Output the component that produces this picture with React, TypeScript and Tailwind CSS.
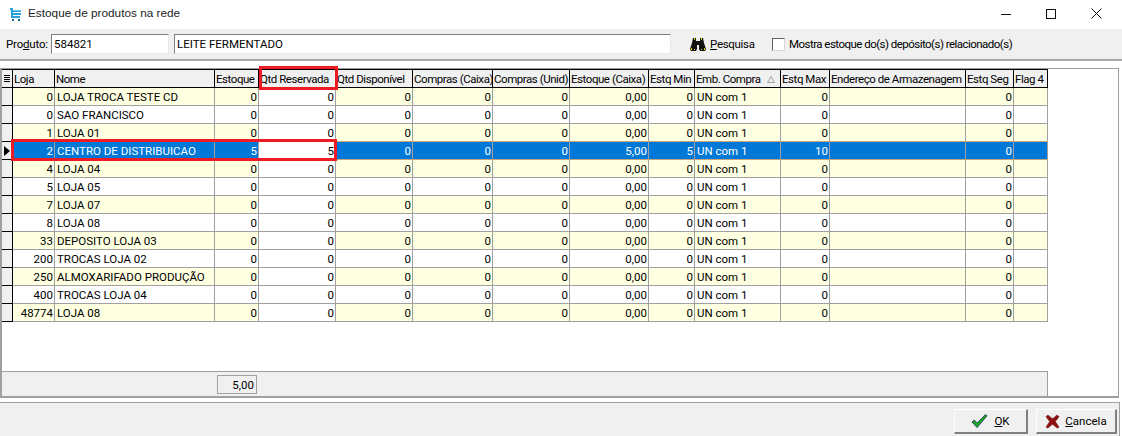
import type { ReactNode } from 'react'

const ROW_GRID = 'grid grid-cols-[11px_42px_160px_44px_77px_77px_80px_77px_79px_46px_86px_49px_136px_48px_34px] w-[1046px]'

const HEADERS = [
  'Loja', 'Nome', 'Estoque', 'Qtd Reservada', 'Qtd Disponível', 'Compras (Caixa)', 'Compras (Unid)',
  'Estoque (Caixa)', 'Estq Min', 'Emb. Compra', 'Estq Max', 'Endereço de Armazenagem', 'Estq Seg', 'Flag 4',
]

const LOJAS: [string, string][] = [
  ['0', 'LOJA TROCA TESTE CD'],
  ['0', 'SAO FRANCISCO'],
  ['1', 'LOJA 01'],
  ['2', 'CENTRO DE DISTRIBUICAO'],
  ['4', 'LOJA 04'],
  ['5', 'LOJA 05'],
  ['7', 'LOJA 07'],
  ['8', 'LOJA 08'],
  ['33', 'DEPOSITO LOJA 03'],
  ['200', 'TROCAS LOJA 02'],
  ['250', 'ALMOXARIFADO PRODUÇÃO'],
  ['400', 'TROCAS LOJA 04'],
  ['48774', 'LOJA 08'],
]

function CartIcon() {
  return (
    <svg width="11" height="14" viewBox="0 0 11 14" className="shrink-0">
      <path d="M0 1h3v2h8v2H3v1h8v2H3v1h7v2H1V3H0z" fill="#2a9fd8" />
      <rect x="3" y="3" width="8" height="1" fill="#62c6f0" />
      <rect x="2" y="12" width="2" height="2" fill="#14709f" />
      <rect x="8" y="12" width="2" height="2" fill="#14709f" />
    </svg>
  )
}

function BinocularsIcon() {
  return (
    <svg width="16" height="14" viewBox="0 0 16 14" className="shrink-0">
      <path d="M3 1h3v3h4V1h3l1 5 2 6-1 2h-5l-1-2V8H7v4l-1 2H1l-1-2 2-6z" fill="#111" />
      <rect x="1" y="11" width="1" height="2" fill="#e8d800" />
      <rect x="4" y="12" width="1" height="1" fill="#e8d800" />
      <rect x="11" y="12" width="1" height="1" fill="#e8d800" />
      <rect x="14" y="11" width="1" height="2" fill="#e8d800" />
      <rect x="4" y="1" width="1" height="2" fill="#e8d800" />
      <rect x="11" y="1" width="1" height="2" fill="#e8d800" />
    </svg>
  )
}

function CheckIcon() {
  return (
    <svg width="17" height="16" viewBox="0 0 18 16" className="shrink-0">
      <path d="M1 9l2.500-2 3 3L15.500 1 17 2.500 6.500 15z" fill="#1fa81f" stroke="#0a2a6a" strokeWidth="0.8" />
    </svg>
  )
}

function CrossIcon() {
  return (
    <svg width="15" height="15" viewBox="0 0 16 16" className="shrink-0">
      <path d="M1 3l2-2 5 4 5-4 2 2-4 5 4 6-2 1-5-4-5 4-2-1 4-6z" fill="#8e1010" stroke="#5e0a0a" strokeWidth="0.5" />
    </svg>
  )
}

function WindowControls() {
  return (
    <div className="ml-auto flex items-center gap-[35px] pr-[20px]">
      <svg width="10" height="10" viewBox="0 0 10 10"><path d="M0 5.500h10" stroke="#111" /></svg>
      <svg width="10" height="10" viewBox="0 0 10 10"><rect x="0.500" y="0.500" width="9" height="9" fill="none" stroke="#111" /></svg>
      <svg width="11" height="11" viewBox="0 0 11 11"><path d="M0.500 0.500l10 10M10.500 0.500l-10 10" stroke="#111" /></svg>
    </div>
  )
}

function HeaderCell({ label }: { label: string }) {
  return (
    <div className="h-[18px] border-r border-b border-black bg-[#f0f0f0] pl-[1px] pt-[2px] flex items-center justify-between overflow-hidden whitespace-nowrap tracking-[-0.45px]">
      <span>{label}</span>
      {label === 'Emb. Compra' && (
        <svg width="8" height="7" viewBox="0 0 8 7" className="mr-[5px] shrink-0">
          <path d="M4 0.500L7.500 6.500H0.500z" fill="none" stroke="#a0a0a0" />
        </svg>
      )}
    </div>
  )
}

function Cell({ children, align, selected, editing, bg }: {
  children?: ReactNode
  align?: 'left' | 'right'
  selected: boolean
  editing?: boolean
  bg: string
}) {
  const tone = editing
    ? 'bg-white text-black'
    : selected
      ? 'bg-[#0078d7] text-white'
      : bg
  return (
    <div
      className={`h-[18px] border-r border-b border-[#a0a0a0] pl-[2px] pr-[1px] leading-[19px] overflow-hidden whitespace-nowrap ${
        align === 'right' ? 'text-right' : 'text-left'
      } ${tone}`}
    >
      {children}
    </div>
  )
}

function DataRow({ loja, nome, index }: { loja: string; nome: string; index: number }) {
  const selected = loja === '2'
  const bg = index % 2 === 0 ? 'bg-[#ffffe1]' : 'bg-white'
  const estoque = selected ? '5' : '0'
  return (
    <div className={`${ROW_GRID} relative`}>
      <div className="h-[18px] border-r border-b border-black bg-[#f0f0f0] flex items-center justify-center">
        {selected && <div className="w-0 h-0 border-y-[5px] border-y-transparent border-l-[6px] border-l-black" />}
      </div>
      <Cell align="right" selected={selected} bg={bg}>{loja}</Cell>
      <Cell selected={selected} bg={bg}>{nome}</Cell>
      <Cell align="right" selected={selected} bg={bg}>{estoque}</Cell>
      <Cell align="right" selected={selected} editing bg={bg}>{estoque}</Cell>
      <Cell align="right" selected={selected} bg={bg}>0</Cell>
      <Cell align="right" selected={selected} bg={bg}>0</Cell>
      <Cell align="right" selected={selected} bg={bg}>0</Cell>
      <Cell align="right" selected={selected} bg={bg}>{selected ? '5,00' : '0,00'}</Cell>
      <Cell align="right" selected={selected} bg={bg}>{estoque}</Cell>
      <Cell selected={selected} bg={bg}>UN com 1</Cell>
      <Cell align="right" selected={selected} bg={bg}>{selected ? '10' : '0'}</Cell>
      <Cell selected={selected} bg={bg} />
      <Cell align="right" selected={selected} bg={bg}>0</Cell>
      <Cell selected={selected} bg={bg} />
      {/* focus rectangle around the current row */}
      {selected && (
        <div className="absolute left-[11px] right-0 top-[-1px] bottom-0 border-y border-dotted border-[#e8a860] pointer-events-none" />
      )}
    </div>
  )
}

export default function App() {
  return (
    <div className="w-[1122px] h-[436px] bg-white flex flex-col overflow-hidden text-[11.5px] text-black font-['Roboto','Liberation_Sans',sans-serif]">
      {/* Title bar */}
      <div className="h-[29px] flex items-center pl-[10px] shrink-0 pb-[2px]">
        <CartIcon />
        <span className="ml-[7px] text-[11.8px] text-[#222] font-['Liberation_Sans',sans-serif]">Estoque de produtos na rede</span>
        <WindowControls />
      </div>

      {/* Product filter */}
      <div className="h-[32px] shrink-0 bg-[#f0f0f0] border-b-2 border-[#a8a8a8] flex items-center pl-[6px] pb-[1px]">
        <span className="w-[45px] pt-[2px] tracking-[-0.2px]">Pro<u>d</u>uto:</span>
        <div className="w-[118px] h-[20px] bg-white border border-t-[#808080] border-l-[#808080] border-r-[#e8e8e8] border-b-[#e8e8e8] pl-[2px] leading-[19px]">584821</div>
        <div className="ml-[5px] w-[497px] h-[20px] bg-white border border-t-[#808080] border-l-[#808080] border-r-[#e8e8e8] border-b-[#e8e8e8] pl-[2px] leading-[19px]">LEITE FERMENTADO</div>
        <div className="ml-[19px] w-[64px] flex items-center gap-[4px]">
          <BinocularsIcon />
          <span className="pt-[2px] tracking-[-0.3px]"><u>P</u>esquisa</span>
        </div>
        <div className="ml-[18px] mt-[1px] w-[13px] h-[13px] bg-white border border-t-[#606060] border-l-[#606060] border-r-[#d8d8d8] border-b-[#d8d8d8]" />
        <span className="ml-[4px] pt-[2px] tracking-[-0.53px]">Mostra estoque do(s) depósito(s) relacionado(s)</span>
      </div>

      {/* Grid panel */}
      <div className="relative mt-[7px] mr-[3px] flex-1 flex flex-col border-l-2 border-t border-r border-[#a0a0a0] min-h-0">
        <div className="flex-1 min-h-0">
          <div className={`${ROW_GRID} border-t border-black`}>
            <div className="h-[18px] border-r border-b border-black bg-[#f0f0f0] flex flex-col justify-center items-center gap-[1px]">
              <div className="w-[6px] h-[1px] bg-black" />
              <div className="w-[6px] h-[1px] bg-black" />
              <div className="w-[6px] h-[1px] bg-black" />
              <div className="w-[6px] h-[1px] bg-black" />
            </div>
            {HEADERS.map((h) => <HeaderCell key={h} label={h} />)}
          </div>
          {LOJAS.map(([loja, nome], i) => (
            <DataRow key={`${loja}-${nome}`} loja={loja} nome={nome} index={i} />
          ))}
        </div>

        {/* Totals */}
        <div className="h-[25px] w-[1046px] shrink-0 bg-[#f0f0f0] border-t border-r border-[#a0a0a0] flex items-center pl-[215px]">
          <div className="w-[40px] h-[19px] border border-[#a0a0a0] text-right pr-[2px] leading-[18px]">5,00</div>
        </div>
        <div className="h-[2px] shrink-0 bg-[#a0a0a0]" />

        {/* Highlights */}
        <div className="absolute left-[257px] top-[-3px] w-[79px] h-[24px] border-[3px] border-[#ed1c24] pointer-events-none" />
        <div className="absolute left-[9px] top-[70px] w-[326px] h-[22px] border-[3px] border-[#ed1c24] pointer-events-none" />
      </div>

      {/* Footer */}
      <div className="h-[34px] shrink-0 mt-[4px] mr-[2px] bg-[#f0f0f0] border-t border-r border-[#a0a0a0] flex items-start justify-end pt-[6px] pr-[2px] gap-[8px]">
        <div className="w-[74px] h-[25px] flex items-center justify-center gap-[6px] bg-[#f0f0f0] border-t border-l border-r-2 border-b-2 border-t-white border-l-white border-r-[#808080] border-b-[#808080]">
          <CheckIcon />
          <span className="pt-[1px]"><u>O</u>K</span>
        </div>
        <div className="w-[81px] h-[25px] flex items-center justify-center gap-[5px] bg-[#f0f0f0] border-t border-l border-r-2 border-b-2 border-t-white border-l-white border-r-[#808080] border-b-[#808080]">
          <CrossIcon />
          <span className="pt-[1px]"><u>C</u>ancela</span>
        </div>
      </div>
    </div>
  )
}
